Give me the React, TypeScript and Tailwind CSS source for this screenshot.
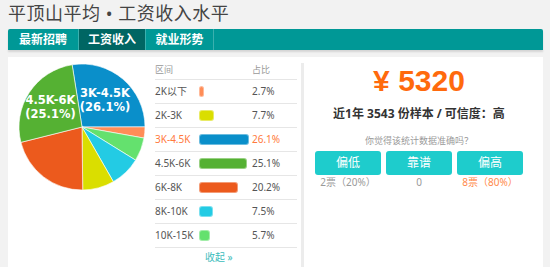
import React from "react";

type Row = { label: string; pct: number; color: string; hl?: boolean };

const rows: Row[] = [
  { label: "2K以下", pct: 2.7, color: "#ff8d57" },
  { label: "2K-3K", pct: 7.7, color: "#dade00" },
  { label: "3K-4.5K", pct: 26.1, color: "#0a8fca", hl: true },
  { label: "4.5K-6K", pct: 25.1, color: "#55b133" },
  { label: "6K-8K", pct: 20.2, color: "#ec5a1d" },
  { label: "8K-10K", pct: 7.5, color: "#23cbe4" },
  { label: "10K-15K", pct: 5.7, color: "#64e16e" },
];

// clockwise order of the slices, starting just left of 12 o'clock
const pieOrder = [2, 0, 6, 5, 1, 4, 3];

function Pie() {
  const cx = 64;
  const cy = 64;
  const r = 63;
  const total = rows.reduce((s, x) => s + x.pct, 0);
  let angle = -9;
  const pt = (a: number) => {
    const rad = ((a - 90) * Math.PI) / 180;
    return [cx + r * Math.cos(rad), cy + r * Math.sin(rad)];
  };
  const slices = pieOrder.map((i) => {
    const sweep = (rows[i].pct / total) * 360;
    const [x1, y1] = pt(angle);
    const [x2, y2] = pt(angle + sweep);
    const large = sweep > 180 ? 1 : 0;
    angle += sweep;
    return (
      <path
        key={i}
        d={`M${cx},${cy} L${x1},${y1} A${r},${r} 0 ${large} 1 ${x2},${y2} Z`}
        fill={rows[i].color}
        stroke="#ffffff"
        strokeWidth={0.6}
      />
    );
  });

  return (
    <svg width="128" height="128" viewBox="0 0 128 128">
      {slices}
      <g
        fill="#ffffff"
        fontFamily="'DejaVu Sans', sans-serif"
        fontWeight="bold"
        fontSize="11.5"
        textAnchor="middle"
      >
        <text x="87" y="34">3K-4.5K</text>
        <text x="87" y="48">(26.1%)</text>
        <text x="32.5" y="41">4.5K-6K</text>
        <text x="32.5" y="55">(25.1%)</text>
      </g>
    </svg>
  );
}

function Table() {
  return (
    <div className="w-[142px] text-[10px] text-[#555]">
      <div className="flex h-[23px] items-center pt-[3px] text-[9px] text-[#999] border-b border-[#e6e6e6]">
        <span className="w-[97px]">区间</span>
        <span>占比</span>
      </div>
      {rows.map((row) => (
        <div
          key={row.label}
          className={`flex h-[24px] items-center border-b border-[#e6e6e6] ${row.hl ? "text-[#ff7a3d]" : ""}`}
        >
          <span className="w-[44px]">{row.label}</span>
          <span className="w-[53px]">
            <span
              className="block h-[11px] rounded-[3px] border border-white/40"
              style={{ width: Math.max(5, row.pct * 1.92), backgroundColor: row.color }}
            />
          </span>
          <span>{row.pct}%</span>
        </div>
      ))}
      <div className="pl-[50px] pt-[2px] text-[10px] text-[#3bbcbc]">收起 »</div>
    </div>
  );
}

function Votes() {
  const items = [
    { label: "偏低", count: "2票（20%）", color: "text-[#9a9a9a]" },
    { label: "靠谱", count: "0", color: "text-[#9a9a9a]" },
    { label: "偏高", count: "8票（80%）", color: "text-[#ff8a4c]" },
  ];
  return (
    <div className="flex gap-[5px]">
      {items.map((it) => (
        <div key={it.label} className="flex w-[66px] flex-col items-center">
          <div className="flex h-[24px] w-full items-center justify-center rounded-[3px] bg-[#1ecccc] text-[12px] text-white">
            {it.label}
          </div>
          <div className={`mt-[1px] text-[10px] leading-[12px] ${it.color}`}>{it.count}</div>
        </div>
      ))}
    </div>
  );
}

export default function App() {
  return (
    <div
      className="h-[267px] w-[550px] overflow-hidden bg-[#f2f2f2] pl-[8px] pr-[7px]"
      style={{ fontFamily: "'Noto Sans', 'Noto Sans CJK SC', sans-serif" }}
    >
      <h1 className="h-[29px] pt-[1px] text-[18px] leading-[24px] tracking-[0.5px] text-[#444]">
        平顶山平均 • 工资收入水平
      </h1>
      <div className="flex h-[21px] rounded-t-[2px] bg-[#009896] shadow-[0_2px_2px_rgba(0,0,0,0.12)] text-[12px] font-bold text-white">
        <div className="flex w-[71px] items-center justify-center border-r border-[#3bb0ae]">最新招聘</div>
        <div className="flex w-[67px] items-center justify-center bg-[#006663] border-r border-[#3bb0ae]">工资收入</div>
        <div className="flex w-[68px] items-center justify-center border-r border-[#3bb0ae]">就业形势</div>
      </div>
      <div className="mt-[7px] flex h-[220px] bg-white">
        <div className="flex w-[293px]">
          <div className="w-[147px] pl-[10px] pt-[6px]">
            <Pie />
          </div>
          <Table />
        </div>
        <div className="mt-[6px] w-[3px] bg-[#ececec]" />
        <div className="flex flex-1 flex-col items-center pr-[9px]">
          <div className="mt-[9px] text-[30px] font-bold leading-[30px] text-[#ff6a0d]" style={{ fontFamily: "'Liberation Sans', 'Noto Sans CJK SC', sans-serif" }}>
            ¥ 5320
          </div>
          <div className="mt-[10px] text-[12px] font-bold leading-[16px] text-[#333]">
            近1年 3543 份样本 / 可信度：高
          </div>
          <div className="mt-[13px] text-[9px] leading-[12px] text-[#9a9a9a]">你觉得该统计数据准确吗？</div>
          <div className="mt-[4px]">
            <Votes />
          </div>
        </div>
      </div>
    </div>
  );
}
